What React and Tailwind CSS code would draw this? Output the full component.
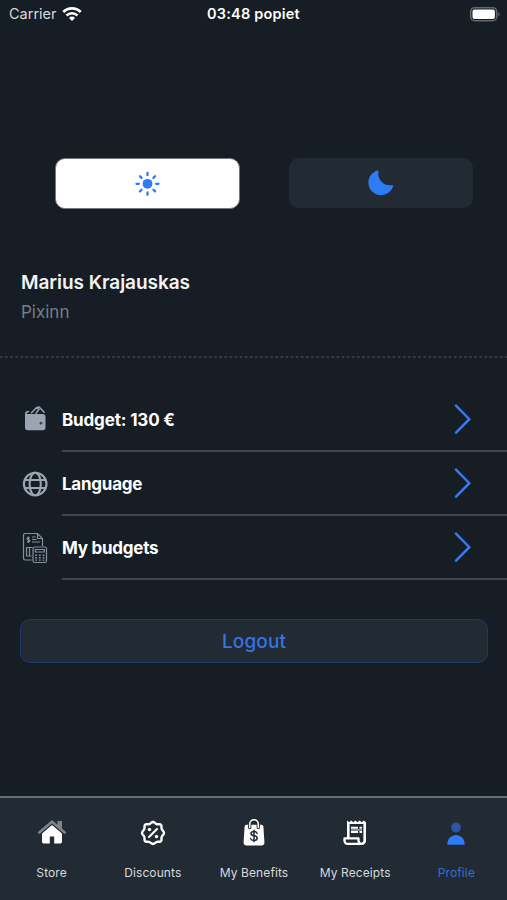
import React from "react";

function Sun() {
  return (
    <svg viewBox="0 0 26 26" className="size-[26px]" fill="none" stroke="#2f7bf6" strokeWidth="2.300" strokeLinecap="round">
      <circle cx="12.500" cy="12.800" r="4.900" fill="#2f7bf6" stroke="none" />
      <path d="M12.500 1.800v2.400M12.500 21.400v2.400M1.500 12.800h2.400M21.100 12.800h2.400M4.900 5.200l1.700 1.700M18.400 18.700l1.700 1.700M20.100 5.200l-1.700 1.700M6.600 18.700l-1.700 1.700" />
    </svg>
  );
}

function Moon() {
  return (
    <svg viewBox="0 0 26 26" className="size-[26px]" fill="#2f7bf6">
      <path d="M9.200.6C10.100.3 10.600.7 10.400 1.500 9.100 9.300 15.500 16.600 24 15.200c.9-.2 1.400.3 1.100 1.200A13 13 0 0 1 13 25.300C6 25.300.4 19.700.4 12.800.4 7.200 3.900 2.400 9.200.6Z" />
    </svg>
  );
}

function Wallet() {
  return (
    <svg viewBox="0 0 26 30" className="h-[30px] w-[26px]" fill="none">
      <path d="M3.800 8.500C3.800 7.200 4.900 6.800 6.500 6.600M9.500 7.800l5-5.100 2.400 1.700-2.900 3.800M15 2.700l1-.5c.8-.3 1.400-.1 1.900.5l4.200 4.600" stroke="#9aa5b1" strokeWidth="1.500" strokeLinecap="round" />
      <path d="M3 8c.7.700 1.500.9 2.700.9h15a2.800 2.800 0 0 1 2.800 2.800v10.800a2.800 2.800 0 0 1-2.800 2.800H5.800A2.800 2.800 0 0 1 3 22.500Z" fill="#9aa5b1" />
      <circle cx="19" cy="18.200" r="1.400" fill="#39434e" />
    </svg>
  );
}

function Globe() {
  return (
    <svg viewBox="0 0 26 26" className="size-[26px]" fill="none" stroke="#9aa5b1" strokeWidth="2.100">
      <circle cx="13.200" cy="13" r="11.300" />
      <ellipse cx="13.200" cy="13" rx="5.600" ry="11.300" />
      <path d="M2.800 9h20.800M2.800 17h20.800" />
    </svg>
  );
}

function BudgetSheet() {
  return (
    <svg viewBox="0 0 26 32" className="h-[32px] w-[26px]" fill="none" stroke="#81909c" strokeWidth="1.200">
      <path d="M9.500 28H3.200A1.700 1.700 0 0 1 1.500 26.300V3.200A1.700 1.700 0 0 1 3.200 1.500h12.300l5 5V14M15.500 1.500v5h5" />
      <path d="M7.800 5.600H6.200c-1.600 0-1.600 2 0 2h.5c1.600 0 1.600 2.300 0 2.300H4.900M6.400 4.500v6.600M10 5h3.500M10 7.500h4.500M10 10h8M4.500 15v9M7.500 15v9M4.500 15.500h6M4.500 24h5" />
      <rect x="11" y="15" width="13.500" height="15.500" rx="1.800" />
      <path d="M13.300 17.500h9v2.500h-9Z" />
      <path d="M13.200 23.300h1.800M16.900 23.300h1.800M20.600 23.300h1.800M13.200 25.700h1.800M16.900 25.700h1.800M20.600 25.700h1.800M13.200 28.100h1.800M16.900 28.100h1.800M20.600 28.100h1.800" strokeWidth="1.400" />
    </svg>
  );
}

function Chevron() {
  return (
    <svg viewBox="0 0 18 30" className="h-[30px] w-[18px]" fill="none" stroke="#2f7bf6" strokeWidth="2.500" strokeLinecap="round" strokeLinejoin="miter">
      <path d="M2 1.700 15.300 15.200 2 28.700" />
    </svg>
  );
}

function Store() {
  return (
    <svg viewBox="0 0 28 28" className="size-[28px]">
      <path d="M19.500 7V2h4.500V11" fill="#7d848d" />
      <path d="M1.300 13.500 14 2.700l12.700 10.800" fill="none" stroke="#7d848d" strokeWidth="2.600" strokeLinecap="round" />
      <path d="M14 6 24 14.500v8.300a1.700 1.700 0 0 1-1.700 1.700H16.200v-7h-4.400v7H5.700A1.700 1.700 0 0 1 4 22.800v-8.300Z" fill="#fff" />
    </svg>
  );
}

function Discounts() {
  return (
    <svg viewBox="0 0 28 28" className="size-[28px]" fill="none" stroke="#fff" strokeWidth="2.400" strokeLinecap="round" strokeLinejoin="round">
      <path d="M14 3c1.700 0 2.400 1.900 4 2.200 1.600.3 3-.5 4 .6s.2 2.500.6 4C23 11.300 25 12.300 25 14s-2 2.600-2.400 4.200c-.4 1.500.4 2.900-.6 4s-2.400.2-4 .6c-1.600.4-2.300 2.200-4 2.200s-2.400-1.800-4-2.200c-1.600-.4-3 .5-4-.6s-.2-2.500-.6-4C5 16.600 3 15.700 3 14s2-2.700 2.400-4.200c.4-1.500-.4-2.900.6-4s2.400-.3 4-.6C11.600 4.900 12.300 3 14 3Z" />
      <path d="m10 18 8-8" strokeWidth="2.100" />
      <circle cx="10.500" cy="10.500" r="1.700" fill="#fff" stroke="none" />
      <circle cx="17.500" cy="17.500" r="1.700" fill="#fff" stroke="none" />
    </svg>
  );
}

function Benefits() {
  return (
    <svg viewBox="0 0 28 28" className="size-[28px]" fill="none" strokeLinecap="round">
      <path d="M6.500 5.800h15a1.900 1.900 0 0 1 1.900 1.700l1 15.500a3.200 3.200 0 0 1-3.100 3.500H6.700A3.200 3.200 0 0 1 3.600 23l1-15.500a1.900 1.900 0 0 1 1.900-1.700Z" fill="#fff" />
      <path d="M9.700 8.500V5a4.300 4.300 0 0 1 8.600 0v3.500" stroke="#222a34" strokeWidth="3.400" />
      <path d="M9.700 8.500V5a4.300 4.300 0 0 1 8.600 0v3.500" stroke="#fff" strokeWidth="1.600" />
      <path d="M17 14.200c-.4-1.200-1.500-1.700-3-1.700-4 0-4 3.900 0 4.300 4.300.4 4.200 4.700-.1 4.700-1.700 0-2.900-.6-3.300-1.900M14 11.300v11.400" stroke="#222a34" strokeWidth="1.500" />
    </svg>
  );
}

function Receipts() {
  return (
    <svg viewBox="0 0 28 28" className="size-[28px]" fill="none" stroke="#fff" strokeWidth="2.600" strokeLinejoin="round">
      <path d="M7.300 19V4M23.700 4v17.800a3 3 0 0 1-3 3" />
      <path d="M20.700 24.800H6.500a3 3 0 0 1-3-3v-2.500h14v2.300a3.200 3.200 0 0 0 3.200 3.200Z" strokeWidth="2.300" />
      <path d="M6 5V1.500l2.100 1.700 2.100-1.700 2.100 1.700 2.100-1.700 2.100 1.700 2.100-1.700 2.100 1.700 2.100-1.700L25 3.200V5Z" fill="#fff" stroke="none" />
      <path d="M10 8.700h7M18.500 8.700H21M10 13h7M18.500 13H21" strokeWidth="2" />
      <path d="M10 10.900h11" stroke="#89919b" strokeWidth="2" />
    </svg>
  );
}

function Profile() {
  return (
    <svg viewBox="0 0 28 28" className="size-[28px]">
      <circle cx="14" cy="8.500" r="4.900" fill="#2956a5" />
      <path d="M5.300 25.700v-1a8.700 8.700 0 0 1 17.400 0v1Z" fill="#2f7bf6" />
    </svg>
  );
}

const rows = [
  { label: "Budget: 130 €", icon: Wallet, tracking: "tracking-[-0.15px]" },
  { label: "Language", icon: Globe, tracking: "tracking-[-0.25px]" },
  { label: "My budgets", icon: BudgetSheet, tracking: "tracking-[-0.25px]" },
];

const tabs = [
  { label: "Store", icon: Store },
  { label: "Discounts", icon: Discounts },
  { label: "My Benefits", icon: Benefits },
  { label: "My Receipts", icon: Receipts },
  { label: "Profile", icon: Profile, active: true },
];

export default function App() {
  return (
    <div className="flex h-[900px] w-[507px] flex-col overflow-hidden bg-[#171d24] font-['Inter','Liberation_Sans',sans-serif] text-white">
      <header className="grid h-7 shrink-0 grid-cols-3 items-center pl-[9px] pr-[6px]">
        <div className="flex items-center gap-[5px] text-[14.500px] leading-none text-[#d5d8db]">
          <span>Carrier</span>
          <svg viewBox="0 0 20 15" className="h-[15px] w-[20px]" fill="none" stroke="#fff" strokeWidth="2.700">
            <path d="M1.300 5a12.300 12.300 0 0 1 17.400 0M4.500 8.500a7.800 7.800 0 0 1 11 0" />
            <path d="M7 11a4.300 4.300 0 0 1 6 0l-3 3.100Z" fill="#fff" stroke="none" />
          </svg>
        </div>
        <div className="-ml-[3px] whitespace-nowrap text-center text-[14.500px] font-semibold leading-none tracking-[0.2px]">03:48 popiet</div>
        <div className="flex items-center justify-end pb-px">
          <svg viewBox="0 0 32 16" className="h-[16px] w-[32px]">
            <rect x="1.700" y="1.700" width="26" height="13" rx="4" fill="#171d24" stroke="#626870" strokeWidth="1.600" />
            <rect x="3.500" y="3.500" width="22.400" height="9.400" rx="2" fill="#fff" />
            <path d="M29.300 6v4.500q2.800-2.200 0-4.500" fill="#626870" />
          </svg>
        </div>
      </header>

      <div className="mt-[130px] flex shrink-0 gap-[49px] pl-[55px]">
        <button className="flex h-[51px] w-[185px] items-center justify-center rounded-[10px] border border-[#747980] bg-white"><Sun /></button>
        <button className="flex h-[50px] w-[184px] items-center justify-center rounded-[10px] bg-[#222a34]"><Moon /></button>
      </div>

      <section className="mt-[61px] h-[86px] shrink-0 pl-[21px]">
        <h1 className="text-[19px] font-semibold leading-[26px] tracking-[-0.05px] text-[#f3f4f5]">Marius Krajauskas</h1>
        <p className="mt-[4px] text-[17px] leading-[24px] text-[#747e89]">Pixinn</p>
      </section>
      <svg viewBox="0 0 507 2" className="h-[2px] w-full shrink-0"><path d="M0 1h507" stroke="#41474f" strokeWidth="1.600" strokeDasharray="2.600 2.500" /></svg>

      <nav className="mt-[30px] shrink-0">
        {rows.map(({ label, icon: Icon, tracking }) => (
          <div key={label} className="flex h-16 items-stretch pl-[22px]">
            <div className="flex w-[26px] items-center justify-center"><Icon /></div>
            <div className="ml-[14px] flex flex-1 items-center justify-between border-b-2 border-[#41464d] pr-[35px]">
              <span className={`pt-[4px] text-[17px] font-bold ${tracking}`}>{label}</span>
              <Chevron />
            </div>
          </div>
        ))}
      </nav>

      <button className="mx-5 mt-[39px] flex h-[44px] w-[468px] shrink-0 items-center justify-center rounded-[10px] border-[1.500px] border-[#1e3a68] bg-[#222a34] pt-[3px] text-[19px] font-medium tracking-[0.1px] text-[#3475e0]">Logout</button>

      <footer className="mt-auto flex h-[104px] shrink-0 border-t-2 border-[#666d77] bg-[#222a34] pl-px">
        {tabs.map(({ label, icon: Icon, active }) => (
          <div key={label} className="flex flex-1 flex-col items-center pt-[21px]">
            <Icon />
            <span className={`mt-[18px] whitespace-nowrap text-[12px] leading-4 tracking-[0.1px] ${active ? "text-[#326fce]" : "text-[#d7dadd]"}`}>{label}</span>
          </div>
        ))}
      </footer>
    </div>
  );
}
